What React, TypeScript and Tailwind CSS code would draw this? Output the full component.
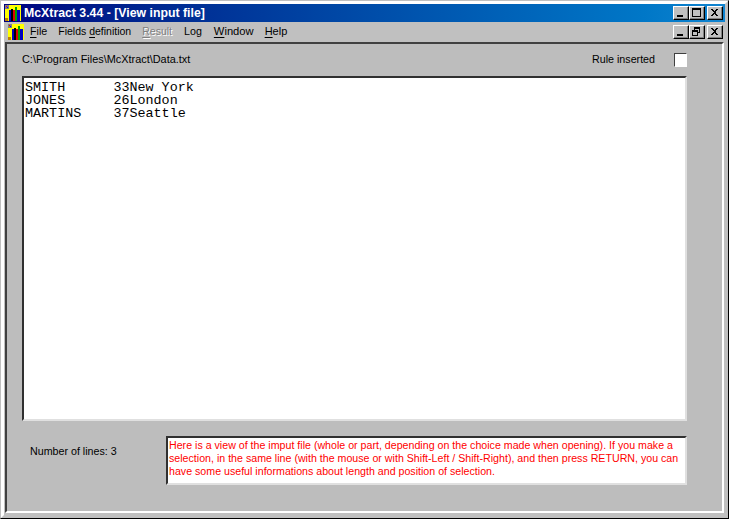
const Underlined = ({ ch }: { ch: string }) => <span className="underline underline-offset-2">{ch}</span>

const AppIcon = () => (
	<svg width="16" height="16" viewBox="0 0 16 16" shapeRendering="crispEdges">
		<rect width="16" height="16" fill="#ffff00" />
		<rect x="0" y="0" width="4" height="4" fill="#808080" />
		<rect x="1" y="1" width="1" height="1" fill="#ff0000" />
		<rect x="2" y="2" width="1" height="1" fill="#0000ff" />
		<rect x="0" y="13" width="3" height="3" fill="#c08000" />
		<rect x="4" y="5" width="2" height="11" fill="#0000c0" />
		<rect x="6" y="4" width="2" height="12" fill="#000000" />
		<rect x="8" y="5" width="2" height="11" fill="#e00000" />
		<rect x="10" y="2" width="2" height="14" fill="#00a000" />
		<rect x="12" y="5" width="3" height="11" fill="#0000c0" />
	</svg>
)

const CaptionButton = ({ children, ml = "" }: { children: React.ReactNode; ml?: string }) => (
	<div
		className={`w-4 h-[14px] bg-[#c0c0c0] border border-t-white border-l-white border-r-black border-b-black shadow-[inset_-1px_-1px_0_#808080] flex items-center justify-center ${ml}`}
	>
		<svg width="12" height="10" viewBox="0 0 12 10" shapeRendering="crispEdges">
			{children}
		</svg>
	</div>
)

const MinIcon = () => <rect x="2" y="7" width="6" height="2" fill="#000" />
const MaxIcon = () => (
	<>
		<rect x="1.5" y="0.5" width="8" height="8" fill="none" stroke="#000" />
		<rect x="1" y="1" width="9" height="1" fill="#000" />
	</>
)
const RestoreIcon = () => (
	<>
		<rect x="3.5" y="0.5" width="5" height="5" fill="none" stroke="#000" />
		<rect x="3" y="1" width="6" height="1" fill="#000" />
		<rect x="1.5" y="3.5" width="5" height="5" fill="#c0c0c0" stroke="#000" />
		<rect x="1" y="4" width="6" height="1" fill="#000" />
	</>
)
const CloseIcon = () => (
	<path d="M2 1h2v1h1v1h1V2h1V1h2v1H8v1H7v1H6.5v1H7v1h1v1h1v1H7V7H6V6H5v1H4v1H2V7h1V6h1V5h.5V4H4V3H3V2H2z" fill="#000" />
)

const FIELD_TEXT = "SMITH      33New York\nJONES      26London\nMARTINS    37Seattle"

export default function App() {
	return (
		<div className="w-[729px] h-[519px] overflow-hidden bg-[#c0c0c0] border border-t-[#c0c0c0] border-l-[#c0c0c0] border-r-black border-b-black font-['Liberation_Sans',sans-serif] text-[10.7px] leading-[13px] text-black">
			<div className="h-full border-[3px] border-t-white border-l-white border-r-[#c0c0c0] border-b-[#c0c0c0] flex flex-col">
				{/* Barra de título */}
				<div className="h-[18px] shrink-0 flex items-center pl-[1px] pr-[2px] bg-gradient-to-r from-[#000080] to-[#1084d0]">
					<AppIcon />
					<span className="ml-[3px] font-bold text-[12.3px] leading-none text-white whitespace-nowrap">McXtract 3.44 - [View input file]</span>
					<div className="ml-auto flex">
						<CaptionButton><MinIcon /></CaptionButton>
						<CaptionButton><MaxIcon /></CaptionButton>
						<CaptionButton ml="ml-[2px]"><CloseIcon /></CaptionButton>
					</div>
				</div>

				{/* Menu */}
				<div className="h-[19px] shrink-0 flex items-center pl-[4px] pr-[2px]">
					<AppIcon />
					<div className="ml-[6px] flex gap-[11px] whitespace-nowrap">
						<span><Underlined ch="F" />ile</span>
						<span className="text-[10.5px]">Fields <Underlined ch="d" />efinition</span>
						<span className="text-[10.5px] text-[#808080] [text-shadow:1px_1px_0_#fff]"><Underlined ch="R" />esult</span>
						<span className="ml-[1px]">Log</span>
						<span className="ml-[1px] text-[11.2px]"><Underlined ch="W" />indow</span>
						<span className="text-[11px]"><Underlined ch="H" />elp</span>
					</div>
					<div className="ml-auto flex">
						<CaptionButton><MinIcon /></CaptionButton>
						<CaptionButton><RestoreIcon /></CaptionButton>
						<CaptionButton ml="ml-[2px]"><CloseIcon /></CaptionButton>
					</div>
				</div>

				{/* Área do formulário */}
				<div className="flex-1 mt-[1px] mx-[1px] mb-[2px] border-2 border-t-[#404040] border-l-[#404040] border-r-white border-b-white bg-[#bdbdbd] flex flex-col pl-[15px] pr-[35px]">
					<div className="h-[32px] shrink-0 flex items-center">
						<span className="mt-[-2px] text-[10.9px]">C:\Program Files\McXtract\Data.txt</span>
						<span className="ml-auto mt-[-2px]">Rule inserted</span>
						<div className="ml-[19px] w-[13px] h-[14px] bg-white border border-t-[#404040] border-l-[#404040] border-r-white border-b-white" />
					</div>
					<div className="h-[345px] shrink-0 bg-white border-2 border-t-[#303030] border-l-[#303030] border-r-[#e0e0e0] border-b-[#e0e0e0] px-[1px] py-[3px]">
						<pre className="font-['Liberation_Mono',monospace] text-[13.4px] leading-[13px]">{FIELD_TEXT}</pre>
					</div>
					<div className="mt-[15px] flex">
						<span className="ml-[8px] mt-[9px]">Number of lines: 3</span>
						<div className="ml-auto w-[521px] h-[49px] bg-white border-2 border-t-[#303030] border-l-[#303030] border-r-[#e0e0e0] border-b-[#e0e0e0] pl-[1px] pt-[1px] text-[10.65px] text-[#ff0000] whitespace-nowrap">
							<div>Here is a view of the imput file (whole or part, depending on the choice made when opening). If you make a</div>
							<div>selection, in the same line (with the mouse or with Shift-Left / Shift-Right), and then press RETURN, you can</div>
							<div>have some useful informations about length and position of selection.</div>
						</div>
					</div>
				</div>
			</div>
		</div>
	)
}
